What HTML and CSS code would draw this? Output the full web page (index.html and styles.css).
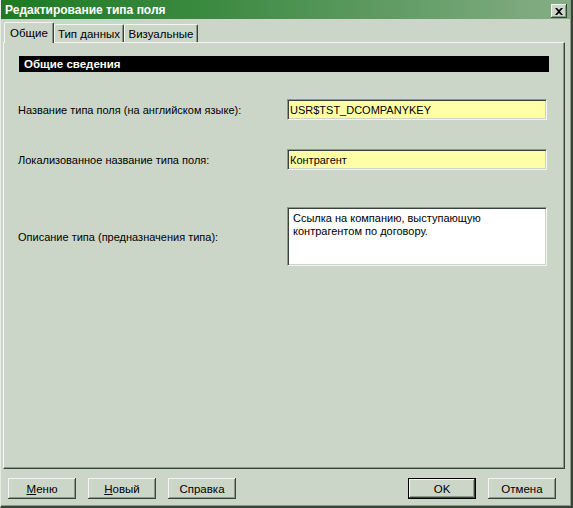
FILE: index.html
```html
<!DOCTYPE html>
<html lang="ru">
<head>
<meta charset="utf-8">
<title>Редактирование типа поля</title>
<link rel="stylesheet" href="styles.css">
</head>
<body>
<div class="window">
  <div class="titlebar">
    <span class="title">Редактирование типа поля</span>
    <button class="close" aria-label="Закрыть">
      <svg width="8" height="7" viewBox="0 0 8 7"><path d="M0 0h2l2 2 2-2h2L5 3.5 8 7H6L4 5 2 7H0l3-3.5z" fill="#000"/></svg>
    </button>
  </div>
  <div class="tabs">
    <div class="tab active">Общие</div>
    <div class="tab tab2">Тип данных</div>
    <div class="tab tab3">Визуальные</div>
  </div>
  <div class="panel">
    <div class="section">Общие сведения</div>
    <div class="row row1">
      <label class="label">Название типа поля (на английском языке):</label>
      <div class="field">USR$TST_DCOMPANYKEY</div>
    </div>
    <div class="row row2">
      <label class="label">Локализованное название типа поля:</label>
      <div class="field">Контрагент</div>
    </div>
    <div class="row row3">
      <label class="label">Описание типа (предназначения типа):</label>
      <div class="memo">Ссылка на компанию, выступающую контрагентом по договору.</div>
    </div>
  </div>
  <div class="footer">
    <div class="group">
      <button class="btn"><u>М</u>еню</button>
      <button class="btn"><u>Н</u>овый</button>
      <button class="btn">Справка</button>
    </div>
    <div class="group">
      <button class="btn default">OK</button>
      <button class="btn">Отмена</button>
    </div>
  </div>
</div>
</body>
</html>
```
FILE: styles.css
```css
html, body {
  margin: 0;
  padding: 0;
  background: #ccd6c8;
}
.window {
  width: 573px;
  height: 508px;
  box-sizing: border-box;
  background: #ccd6c8;
  border-left: 1px solid #e6ece3;
  border-right: 2px solid #3a433a;
  border-bottom: 2px solid #3a433a;
  box-shadow: inset -1px -1px 0 #879b85;
  font-family: "Liberation Sans", Arial, sans-serif;
  font-size: 11px;
  color: #000;
  display: flex;
  flex-direction: column;
  position: relative;
}
.titlebar {
  height: 19px;
  margin-right: 1px;
  background: linear-gradient(to right, #1d7a22 0%, #3f8c45 40%, #86ad86 100%);
  display: flex;
  align-items: center;
  justify-content: space-between;
  padding: 0 3px 0 4px;
}
.title {
  color: #fff;
  font-weight: bold;
  font-size: 12px;
}
.close {
  width: 16px;
  height: 14px;
  padding: 0;
  margin-top: 3px;
  background: #ccd6c8;
  border: none;
  box-shadow: inset -1px -1px 0 #3a433a, inset 1px 1px 0 #f2f5f0, inset -2px -2px 0 #879b85;
  display: flex;
  align-items: center;
  justify-content: center;
}
.tabs {
  display: flex;
  align-items: flex-end;
  height: 23px;
  padding-left: 3px;
  position: relative;
  z-index: 1;
}
.tab {
  height: 18px;
  width: 70px;
  box-sizing: border-box;
  border-top: 1px solid #f2f5f0;
  border-left: 1px solid #f2f5f0;
  border-right: 1px solid #3a433a;
  box-shadow: inset -1px 0 0 #879b85;
  border-radius: 2px 2px 0 0;
  display: flex;
  align-items: center;
  justify-content: center;
  white-space: nowrap;
  padding-top: 1px;
  font-size: 11.5px;
}
.tab.active {
  height: 21px;
  width: 50px;
  margin-bottom: -1px;
  padding-top: 0;
  background: #ccd6c8;
}
.tab3 { width: 74px; }
.panel {
  margin: 0 6px 0 2px;
  height: 427px;
  box-sizing: border-box;
  border-top: 1px solid #f2f5f0;
  border-left: 1px solid #f2f5f0;
  border-right: 1px solid #3a433a;
  border-bottom: 1px solid #3a433a;
  box-shadow: inset -1px -1px 0 #879b85;
  padding: 13px 15px 0 14px;
  display: flex;
  flex-direction: column;
}
.section {
  height: 16px;
  background: #000;
  color: #fff;
  font-weight: bold;
  font-size: 11.5px;
  padding-left: 5px;
  display: flex;
  align-items: center;
  margin-left: 1px;
}
.row {
  display: flex;
  align-items: center;
}
.row1 { margin-top: 27px; }
.row2 { margin-top: 29px; }
.row3 { margin-top: 37px; }
.label {
  width: 269px;
  flex: none;
}
.field, .memo {
  width: 260px;
  box-sizing: border-box;
  border-top: 1px solid #879b85;
  border-left: 1px solid #879b85;
  border-bottom: 1px solid #f2f5f0;
  border-right: 1px solid #f2f5f0;
  box-shadow: inset 1px 1px 0 #3a433a, inset -1px -1px 0 #ccd6c8;
}
.field {
  height: 21px;
  background: #ffffa8;
  padding: 0 0 0 2px;
  display: flex;
  align-items: center;
}
.memo {
  height: 59px;
  background: #fff;
  padding: 4px 4px 0 5px;
  line-height: 13px;
}
.footer {
  flex: 1;
  display: flex;
  justify-content: space-between;
  align-items: flex-start;
  padding: 9px 15px 0 7px;
}
.group {
  display: flex;
  gap: 12px;
}
.btn {
  width: 68px;
  height: 21px;
  padding: 0;
  font-family: inherit;
  font-size: 11.5px;
  font-weight: normal;
  color: #000;
  background: #ccd6c8;
  border: none;
  box-shadow: inset -1px -1px 0 #3a433a, inset 1px 1px 0 #f2f5f0, inset -2px -2px 0 #879b85;
}
.btn.default {
  box-shadow: inset 0 0 0 1px #000, inset -2px -2px 0 #3a433a, inset 2px 2px 0 #f2f5f0, inset -3px -3px 0 #879b85;
}
.btn u { text-decoration: underline; }
```
